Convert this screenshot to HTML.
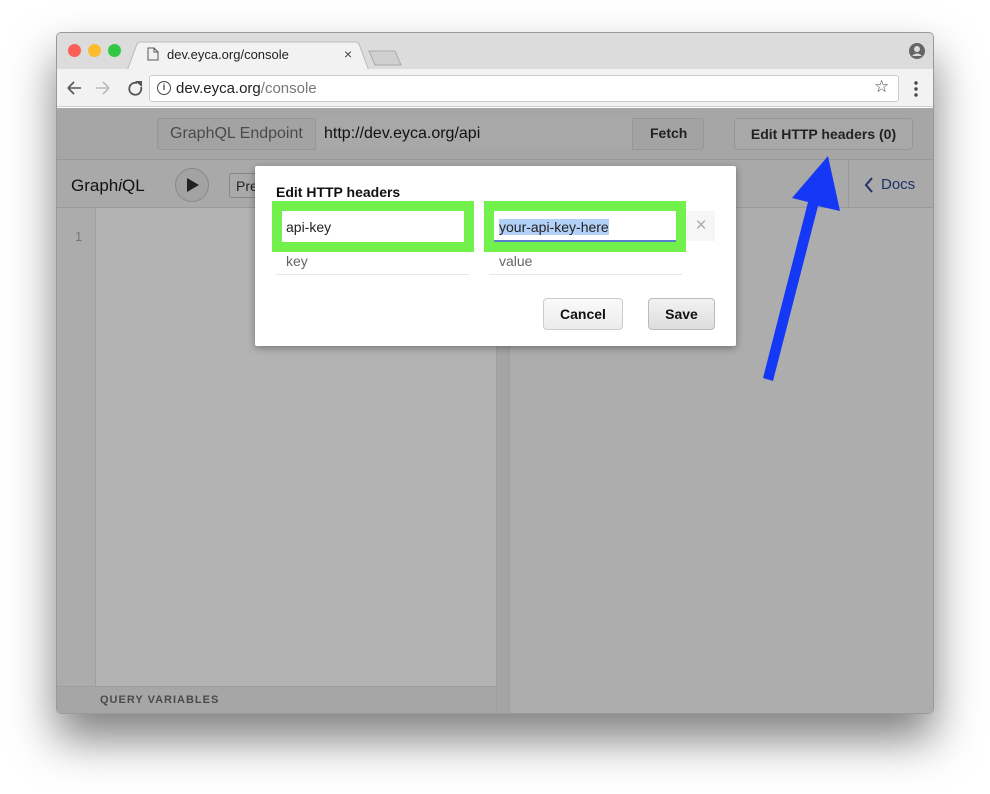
<!DOCTYPE html>
<html><head><style>
*{margin:0;padding:0;box-sizing:border-box}
body{width:990px;height:794px;background:#fff;font-family:"Liberation Sans",sans-serif;position:relative;overflow:hidden}
.win{position:absolute;left:56px;top:32px;width:878px;height:682px;border-radius:5px;overflow:hidden;box-shadow:0 25px 45px rgba(0,0,0,.5);border:1px solid #999}
.abs{position:absolute}
</style></head><body>
<div class="win">
 <div class="abs" style="left:0;top:0;width:878px;height:36px;background:#dcdcdc"></div>
 <div class="abs" style="left:11px;top:11px;width:13px;height:13px;border-radius:50%;background:#fc5f57"></div>
 <div class="abs" style="left:31px;top:11px;width:13px;height:13px;border-radius:50%;background:#fdbc2e"></div>
 <div class="abs" style="left:51px;top:11px;width:13px;height:13px;border-radius:50%;background:#33c748"></div>
 <svg class="abs" style="left:70px;top:8px" width="280" height="30"><path d="M0 30 L10 3 Q11 1 14 1 L228 1 Q231 1 232 3 L242 30 Z" fill="#f2f2f2" stroke="#bbb"/><path d="M242 10 L268 10 L274 24 L248 24 Z" fill="#d0d0d0" stroke="#aaa"/></svg>
 <svg class="abs" style="left:90px;top:14px" width="12" height="14"><path d="M1 1 H7 L11 5 V13 H1 Z M7 1 V5 H11" fill="none" stroke="#555"/></svg>
 <div class="abs" style="left:110px;top:14px;font-size:13px;color:#222">dev.eyca.org/console</div>
 <div class="abs" style="left:287px;top:13px;font-size:14px;color:#444">×</div>
 <svg class="abs" style="left:852px;top:10px" width="16" height="16"><circle cx="8" cy="8" r="8" fill="#666"/><circle cx="8" cy="6" r="3" fill="#dcdcdc"/><path d="M3 13 Q8 8 13 13" fill="#dcdcdc"/></svg>
 <div class="abs" style="left:0;top:36px;width:878px;height:38px;background:#f2f2f2;border-bottom:1px solid #ccc"></div>
 <svg class="abs" style="left:9px;top:47px" width="90" height="16">
  <path d="M2 8 H15 M2 8 L8 2 M2 8 L8 14" stroke="#555" stroke-width="1.6" fill="none"/>
  <path d="M30 8 H43 M43 8 L37 2 M43 8 L37 14" stroke="#bbb" stroke-width="1.6" fill="none"/>
  <path d="M71 3 A6 6 0 1 0 75 7" stroke="#555" stroke-width="1.8" fill="none"/><path d="M69 1 L76 1 L76 7 Z" fill="#555"/>
 </svg>
 <div class="abs" style="left:92px;top:42px;width:750px;height:27px;background:#fff;border:1px solid #ccc;border-radius:3px"></div>
 <div class="abs" style="left:100px;top:48px;width:14px;height:14px;border:1.5px solid #444;border-radius:50%;font-size:9px;text-align:center;line-height:11px;font-weight:bold;color:#444">i</div>
 <div class="abs" style="left:119px;top:47px;font-size:15px;color:#222">dev.eyca.org<span style="color:#777">/console</span></div>
 <div class="abs" style="left:817px;top:44px;font-size:17px;color:#444">☆</div>
 <svg class="abs" style="left:857px;top:48px" width="4" height="16"><circle cx="2" cy="2" r="1.7" fill="#444"/><circle cx="2" cy="8" r="1.7" fill="#444"/><circle cx="2" cy="14" r="1.7" fill="#444"/></svg>
 <!-- app -->
 <div class="abs" style="left:0;top:75px;width:878px;height:52px;background:#a6a6a6;border-bottom:1px solid #999"></div>
 <div class="abs" style="left:100px;top:85px;width:547px;height:32px;border:1px solid #969696;border-radius:4px;background:#a3a3a3"></div>
 <div class="abs" style="left:113px;top:92px;font-size:16px;color:#4a4a4a">GraphQL Endpoint</div>
 <div class="abs" style="left:258px;top:85px;width:318px;height:32px;background:#a8a8a8;border-left:1px solid #969696;border-right:1px solid #969696"></div>
 <div class="abs" style="left:267px;top:92px;font-size:16px;color:#111">http://dev.eyca.org/api</div>
 <div class="abs" style="left:593px;top:92px;font-size:14px;font-weight:bold;color:#222">Fetch</div>
 <div class="abs" style="left:677px;top:85px;width:179px;height:32px;border:1px solid #969696;border-radius:4px;background:#a8a8a8;font-size:14px;font-weight:bold;color:#222;text-align:center;line-height:30px">Edit HTTP headers (0)</div>
 <div class="abs" style="left:0;top:127px;width:878px;height:48px;background:#a9a9a9;border-bottom:1px solid #999"></div>
 <div class="abs" style="left:14px;top:143px;font-size:17px;color:#111">Graph<i>i</i>QL</div>
 <div class="abs" style="left:118px;top:135px;width:34px;height:34px;border-radius:50%;border:1px solid #888;background:#a3a3a3"></div>
 <svg class="abs" style="left:129px;top:145px" width="14" height="14"><path d="M1 0 L13 7 L1 14Z" fill="#222"/></svg>
 <div class="abs" style="left:172px;top:140px;width:40px;height:25px;border:1px solid #888;border-radius:3px;font-size:14px;color:#222;padding:4px 6px">Pre</div>
 <div class="abs" style="left:791px;top:127px;width:1px;height:48px;background:#999"></div>
 <svg class="abs" style="left:807px;top:144px" width="10" height="16"><path d="M8 1 L2 8 L8 15" stroke="#1f3167" stroke-width="2" fill="none"/></svg>
 <div class="abs" style="left:824px;top:143px;font-size:15px;color:#1f3167">Docs</div>
 <div class="abs" style="left:0;top:175px;width:39px;height:478px;background:#acacac;border-right:1px solid #a0a0a0"></div>
 <div class="abs" style="left:18px;top:196px;font-size:13px;color:#777">1</div>
 <div class="abs" style="left:39px;top:175px;width:400px;height:478px;background:#b3b3b3"></div>
 <div class="abs" style="left:439px;top:175px;width:14px;height:507px;background:#a5a5a5;border-left:1px solid #9e9e9e;border-right:1px solid #9e9e9e"></div>
 <div class="abs" style="left:453px;top:175px;width:425px;height:507px;background:#adadad"></div>
 <div class="abs" style="left:0;top:653px;width:439px;height:29px;background:#a6a6a6;border-top:1px solid #9e9e9e"></div>
 <div class="abs" style="left:43px;top:661px;font-size:11px;font-weight:bold;letter-spacing:1px;color:#4a4a4a">QUERY VARIABLES</div>
</div>
<!-- modal -->
<div class="abs" style="left:255px;top:166px;width:481px;height:180px;background:#fff;box-shadow:0 2px 8px rgba(0,0,0,.35);border-radius:2px"></div>
<div class="abs" style="left:276px;top:184px;font-size:14px;font-weight:bold;color:#111">Edit HTTP headers</div>
<div class="abs" style="left:272px;top:201px;width:202px;height:51px;background:#72f04b"></div>
<div class="abs" style="left:282px;top:211px;width:182px;height:31px;background:#fff"></div>
<div class="abs" style="left:286px;top:219px;font-size:14px;color:#222">api-key</div>
<div class="abs" style="left:484px;top:201px;width:202px;height:51px;background:#72f04b"></div>
<div class="abs" style="left:494px;top:211px;width:182px;height:31px;background:#fff;border-bottom:2px solid #5a7fd0"></div>
<div class="abs" style="left:499px;top:219px;font-size:14px;color:#222;background:#b3d1f8">your-api-key-here</div>
<div class="abs" style="left:687px;top:211px;width:28px;height:30px;background:#f6f6f6;color:#aaa;font-size:19px;text-align:center;line-height:30px">×</div>
<div class="abs" style="left:276px;top:252px;width:193px;height:23px;border-bottom:1px solid #e6e6e6;font-size:14px;color:#666;padding:1px 10px">key</div>
<div class="abs" style="left:489px;top:252px;width:193px;height:23px;border-bottom:1px solid #e6e6e6;font-size:14px;color:#666;padding:1px 10px">value</div>
<div class="abs" style="left:543px;top:298px;width:80px;height:32px;border:1px solid #ccc;border-radius:4px;background:linear-gradient(#fafafa,#ececec);font-size:14px;font-weight:bold;color:#111;text-align:center;line-height:30px">Cancel</div>
<div class="abs" style="left:648px;top:298px;width:67px;height:32px;border:1px solid #bbb;border-radius:4px;background:linear-gradient(#f2f2f2,#ddd);font-size:14px;font-weight:bold;color:#111;text-align:center;line-height:30px">Save</div>
<!-- arrow -->
<svg class="abs" style="left:0;top:0" width="990" height="794"><path d="M828 156 L792 198 L808 202 L763 378 L773 381 L818 206 L840 211 Z" fill="#1438f5"/></svg>
</body></html>
